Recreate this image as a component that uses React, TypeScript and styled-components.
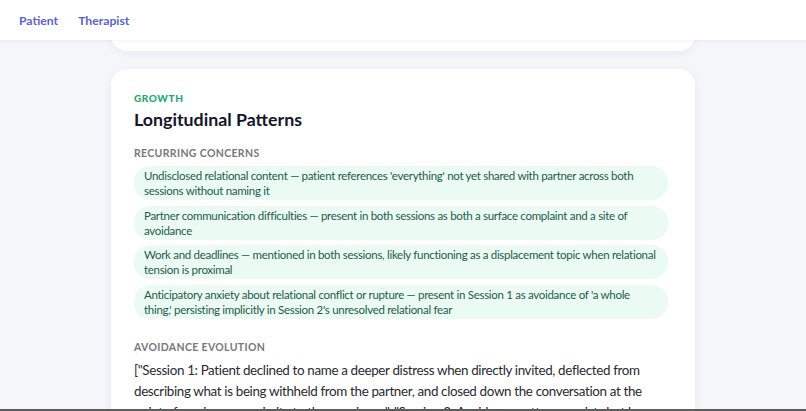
import React from "react";
import styled, { createGlobalStyle } from "styled-components";

const Global = createGlobalStyle`
  html, body { margin: 0; padding: 0; }
  body {
    background: #f5f6fa;
    font-family: Lato, "Noto Sans", sans-serif;
    color: #1a1a2e;
    overflow: hidden;
  }
`;

const Header = styled.header`
  position: sticky;
  top: 0;
  z-index: 2;
  height: 40px;
  background: #ffffff;
  box-shadow: 0 1px 3px rgba(20, 20, 60, 0.05);
  display: flex;
  align-items: center;
  gap: 20px;
  padding: 0 19px;
`;

const NavLink = styled.a`
  color: #5a5fd4;
  font-size: 12.2px;
  font-weight: 700;
  text-decoration: none;
`;

const Main = styled.main`
  display: flex;
  flex-direction: column;
  align-items: center;
  gap: 18px;
`;

const Card = styled.section<{ $stub?: boolean }>`
  width: 584px;
  box-sizing: border-box;
  background: #ffffff;
  border-radius: 16px;
  box-shadow: 0 2px 8px rgba(30, 30, 80, 0.06);
  padding: ${(p) => (p.$stub ? "0" : "22px 27px 24px 23px")};
  height: ${(p) => (p.$stub ? "41px" : "auto")};
  margin-top: ${(p) => (p.$stub ? "-30px" : "0")};
`;

const Eyebrow = styled.div`
  color: #23a872;
  font-size: 10px;
  font-weight: 900;
  letter-spacing: 0.6px;
  text-transform: uppercase;
  line-height: 14px;
`;

const Title = styled.h2`
  margin: 2px 0 0;
  font-size: 17.8px;
  font-weight: 700;
  color: #15152a;
  line-height: 24px;
`;

const SectionLabel = styled.h3<{ $gap?: number }>`
  margin: ${(p) => p.$gap ?? 15}px 0 6px;
  font-size: 10.5px;
  font-weight: 700;
  color: #77777d;
  letter-spacing: 0.35px;
  text-transform: uppercase;
  line-height: 14px;
`;

const PillList = styled.ul`
  list-style: none;
  margin: 0;
  padding: 0;
  display: flex;
  flex-direction: column;
  gap: 5.5px;
`;

const Pill = styled.li`
  background: #ebfbf3;
  border-radius: 16px;
  padding: 2px 10px;
  font-size: 11.5px;
  letter-spacing: -0.3px;
  line-height: 15px;
  color: #1d5c4a;
`;

const Body = styled.p`
  margin: 0;
  font-size: 13.4px;
  letter-spacing: -0.35px;
  line-height: 21px;
  color: #2a2a30;
`;

const BottomEdge = styled.div`
  position: fixed;
  left: 0;
  right: 0;
  bottom: 0;
  height: 2px;
  background: #5c5c5c;
`;

const concerns = [
  "Undisclosed relational content — patient references 'everything' not yet shared with partner across both sessions without naming it",
  "Partner communication difficulties — present in both sessions as both a surface complaint and a site of avoidance",
  "Work and deadlines — mentioned in both sessions, likely functioning as a displacement topic when relational tension is proximal",
  "Anticipatory anxiety about relational conflict or rupture — present in Session 1 as avoidance of 'a whole thing,' persisting implicitly in Session 2's unresolved relational fear",
];

export default function App() {
  return (
    <>
      <Global />
      <Header>
        <NavLink href="#">Patient</NavLink>
        <NavLink href="#">Therapist</NavLink>
      </Header>
      <Main>
        <Card $stub />
        <Card>
          <Eyebrow>Growth</Eyebrow>
          <Title>Longitudinal Patterns</Title>
          <SectionLabel>Recurring concerns</SectionLabel>
          <PillList>
            {concerns.map((c) => (
              <Pill key={c}>{c}</Pill>
            ))}
          </PillList>
          <SectionLabel $gap={21}>Avoidance evolution</SectionLabel>
          <Body>
            ["Session 1: Patient declined to name a deeper distress when directly invited, deflected from
            describing what is being withheld from the partner, and closed down the conversation at the point
            of maximum proximity to the core issue.", "Session 2: Avoidance pattern persists but has shifted in
            form, with the patient acknowledging the withheld content while still deferring its disclosure."]
          </Body>
        </Card>
      </Main>
      <BottomEdge />
    </>
  );
}
